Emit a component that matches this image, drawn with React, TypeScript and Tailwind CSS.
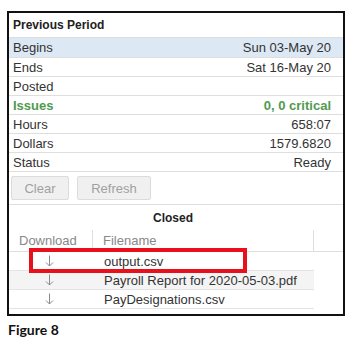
const rows = [
  { label: "Ends", value: "Sat 16-May 20" },
  { label: "Posted", value: "" },
  { label: "Issues", value: "0, 0 critical", green: true },
  { label: "Hours", value: "658:07" },
  { label: "Dollars", value: "1579.6820" },
  { label: "Status", value: "Ready" },
];

const files = ["output.csv", "Payroll Report for 2020-05-03.pdf", "PayDesignations.csv"];

function InfoRow({ label, value, green }: { label: string; value: string; green?: boolean }) {
  return (
    <div className="flex h-[19px] items-center justify-between border-b border-[#dedede] pl-[4px] pr-[12px]">
      <span className={green ? "font-bold text-[#4f9a4f]" : "text-[#333]"}>{label}</span>
      <span className={green ? "font-bold text-[#4f9a4f]" : "text-[#333]"}>{value}</span>
    </div>
  );
}

function DownArrow() {
  return (
    <svg width="9" height="12" viewBox="0 0 9 12" fill="none" stroke="#8a8a8a" strokeWidth="1">
      <path d="M4.5 0.5V11" />
      <path d="M1 7.5L4.5 11L8 7.5" />
    </svg>
  );
}

export default function App() {
  return (
    <div className="h-[347px] w-[357px] bg-white pl-[7px] pt-[11px] text-[13px] leading-none [font-family:'Liberation_Sans',Arial,sans-serif]">
      <div className="relative flex h-[305px] w-[338px] flex-col border-2 border-[#111]">
        <div className="flex h-[25px] items-center border-b border-[#dedede] pl-[4px] text-[12px] font-bold text-[#222]">
          Previous Period
        </div>
        <div className="flex h-[20px] items-center justify-between border-b border-[#dedede] bg-[#dce8f4] pl-[4px] pr-[12px] text-[#333]">
          <span>Begins</span>
          <span>Sun 03-May 20</span>
        </div>
        {rows.map((r) => (
          <InfoRow key={r.label} {...r} />
        ))}

        <div className="flex h-[33px] items-center gap-[8px] border-b border-[#dedede] pl-[2px]">
          <button className="h-[24px] w-[58px] rounded-[2px] border border-[#dcdcdc] bg-[#f0f0f0] text-[#a0a0a0]">
            Clear
          </button>
          <button className="h-[24px] w-[74px] rounded-[2px] border border-[#dcdcdc] bg-[#f0f0f0] text-[#a0a0a0]">
            Refresh
          </button>
        </div>

        <div className="flex h-[25px] items-center justify-center pr-[6px] text-[12px] font-bold text-[#222]">
          Closed
        </div>

        <div className="flex h-[22px] border-b border-[#dedede] text-[#888]">
          <div className="flex w-[84px] items-center border-r border-[#dedede] pl-[10px]">Download</div>
          <div className="flex w-[221px] items-center border-r border-[#dedede] pl-[10px]">Filename</div>
        </div>

        {files.map((f, i) => (
          <div
            key={f}
            className={`flex h-[19px] w-[305px] items-center border-b border-[#e4e4e4] ${i === 1 ? "bg-[#f4f4f4]" : "bg-white"}`}
          >
            <div className="flex w-[80px] justify-center">
              <DownArrow />
            </div>
            <div className="pl-[15px] text-[#333]">{f}</div>
          </div>
        ))}

        <div className="pointer-events-none absolute left-[20px] top-[235px] h-[25px] w-[218px] border-4 border-[#e8101a]" />
      </div>

      <div className="pl-[1px] pt-[7px] text-[14px] font-bold text-[#111] [font-family:Lato,'Open_Sans',sans-serif]">
        Figure 8
      </div>
    </div>
  );
}
